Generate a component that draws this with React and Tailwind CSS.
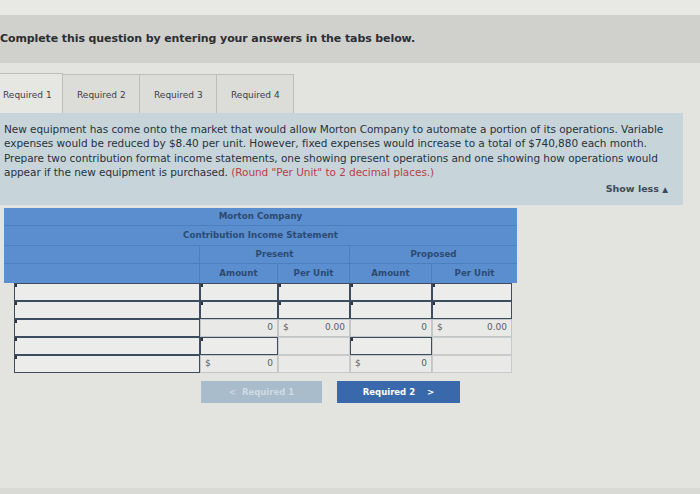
import React from 'react'

const font = "font-['DejaVu_Sans',Verdana,sans-serif]"

const tabs = ['Required 1', 'Required 2', 'Required 3', 'Required 4']

// body rows: each cell is "input", "total" (with value) or "blank"
const rows = [
    [{ t: 'input' }, { t: 'input' }, { t: 'input' }, { t: 'input' }, { t: 'input' }],
    [{ t: 'input' }, { t: 'input' }, { t: 'input' }, { t: 'input' }, { t: 'input' }],
    [{ t: 'input' }, { t: 'total', v: '0' }, { t: 'total', v: '0.00', d: true }, { t: 'total', v: '0' }, { t: 'total', v: '0.00', d: true }],
    [{ t: 'input' }, { t: 'input' }, { t: 'blank' }, { t: 'input' }, { t: 'blank' }],
    [{ t: 'input' }, { t: 'total', v: '0', d: true }, { t: 'blank' }, { t: 'total', v: '0', d: true }, { t: 'blank' }],
]

const widths = ['w-[186px]', 'w-[78px]', 'w-[72px]', 'w-[82px]', 'w-[80px]']

const Cell = ({ cell, w }) => {
    if (cell.t === 'input') {
        return (
            <div className={`${w} h-full relative bg-[#ececea] border-[1.5px] border-[#3e4c60]`}>
                <span className="absolute left-0 top-0 w-[2px] h-[3px] bg-[#2a3646]" />
            </div>
        )
    }
    if (cell.t === 'total') {
        return (
            <div className={`${w} h-full flex items-center justify-between px-[4px] bg-[#e9e9e7] border border-[#c3c6c7] text-[9px] text-[#5a5f66]`}>
                <span>{cell.d ? '$' : ''}</span>
                <span>{cell.v}</span>
            </div>
        )
    }
    return <div className={`${w} h-full bg-[#e9e9e7] border border-[#c8cacb]`} />
}

export default function App() {
    return (
        <div className={`w-[700px] h-[494px] overflow-hidden bg-[#e3e3df] ${font}`}>
            <div className="h-[15px] bg-[#e8e8e5]" />

            {/* instructions band */}
            <div className="h-[48px] bg-[#d0d0cd] flex items-center">
                <p className="text-[11px] font-bold text-[#2b2f33] tracking-[-0.1px]">
                    Complete this question by entering your answers in the tabs below.
                </p>
            </div>

            {/* tabs */}
            <div className="mt-[10px] h-[40px] flex items-stretch">
                {tabs.map((tab, i) => (
                    <div
                        key={tab}
                        className={`flex items-center pt-[4px] text-[9px] text-[#3b4048] border-t border-r border-[#bdbdba] ${i === 0 ? 'w-[63px] pl-[3px] bg-[#e6e6e3]' : 'w-[77px] pl-[14px] bg-[#dcdcd9] mt-[1px]'}`}
                    >
                        {tab}
                    </div>
                ))}
            </div>

            {/* question panel */}
            <div className="w-[683px] h-[92px] bg-[#c7d5da] pl-[4px] pt-[9px] relative">
                <p className="text-[10.5px] leading-[14.4px] text-[#28323c] whitespace-nowrap tracking-[-0.05px]">
                    New equipment has come onto the market that would allow Morton Company to automate a portion of its operations. Variable<br />
                    expenses would be reduced by $8.40 per unit. However, fixed expenses would increase to a total of $740,880 each month.<br />
                    Prepare two contribution format income statements, one showing present operations and one showing how operations would<br />
                    appear if the new equipment is purchased. <span className="text-[#b8404a]">(Round "Per Unit" to 2 decimal places.)</span>
                </p>
                <div className="absolute right-[15px] bottom-[9px] text-[9.5px] font-bold text-[#3c4a5a]">
                    Show less <span className="text-[7.5px]">▲</span>
                </div>
            </div>

            {/* statement table */}
            <div className="ml-[4px] mt-[3px] w-[513px]">
                <div className="bg-[#5a8ecf] text-[8.7px] font-bold text-[#2c4a72]">
                    <div className="h-[18px] flex items-center justify-center border-b border-[#4d7fbf]">Morton Company</div>
                    <div className="h-[20px] flex items-center justify-center border-b border-[#4d7fbf]">Contribution Income Statement</div>
                    <div className="h-[18px] flex border-b border-[#4d7fbf]">
                        <div className="w-[196px] border-r border-[#4d7fbf]" />
                        <div className="w-[150px] flex items-center justify-center border-r border-[#4d7fbf]">Present</div>
                        <div className="flex-1 flex items-center justify-center">Proposed</div>
                    </div>
                    <div className="h-[19px] flex">
                        <div className="w-[196px] border-r border-[#4d7fbf]" />
                        <div className="w-[78px] flex items-center justify-center border-r border-[#4d7fbf]">Amount</div>
                        <div className="w-[72px] flex items-center justify-center border-r border-[#4d7fbf]">Per Unit</div>
                        <div className="w-[82px] flex items-center justify-center border-r border-[#4d7fbf]">Amount</div>
                        <div className="flex-1 flex items-center justify-center">Per Unit</div>
                    </div>
                </div>

                <div className="pl-[10px]">
                    {rows.map((row, r) => (
                        <div key={r} className="h-[18px] flex">
                            {row.map((cell, c) => (
                                <Cell key={c} cell={cell} w={widths[c]} />
                            ))}
                        </div>
                    ))}
                </div>
            </div>

            {/* navigation */}
            <div className="mt-[8px] flex gap-[15px] pl-[201px]">
                <div className="w-[121px] h-[22px] bg-[#a9bccb] flex items-center justify-center gap-[6px] text-[8.5px] font-bold text-[#cfdbe4]">
                    <span>&lt;</span><span>Required 1</span>
                </div>
                <div className="w-[123px] h-[22px] bg-[#3a69ab] flex items-center justify-center gap-[12px] text-[8.5px] font-bold text-white">
                    <span>Required 2</span><span>&gt;</span>
                </div>
            </div>

            <div className="mt-[85px] h-[10px] bg-[#d9d9d5]" />
        </div>
    )
}
